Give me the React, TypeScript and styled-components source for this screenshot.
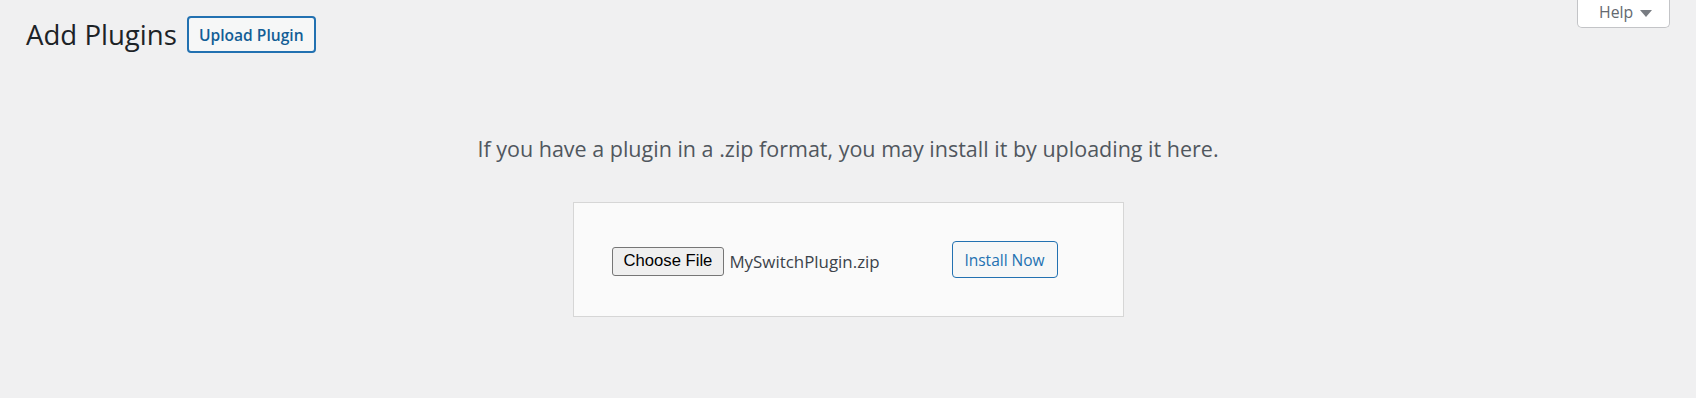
import React from "react";
import styled, { createGlobalStyle } from "styled-components";

const GlobalStyle = createGlobalStyle`
  html, body {
    margin: 0;
    padding: 0;
    background: #f0f0f1;
  }
  body {
    font-family: "Open Sans", "Noto Sans", Arial, sans-serif;
    color: #3c434a;
  }
  * { box-sizing: border-box; }
`;

const Page = styled.div`
  min-height: 398px;
  padding: 0 26px;
  background: #f0f0f1;
`;

const HelpTab = styled.button`
  float: right;
  display: flex;
  align-items: center;
  gap: 7px;
  height: 28px;
  width: 93px;
  padding: 0 18px 2px 21px;
  background: #ffffff;
  border: 1px solid #c3c4c7;
  border-top: none;
  border-radius: 0 0 5px 5px;
  color: #646970;
  font-family: inherit;
  font-size: 15.8px;
  line-height: 1;
  cursor: pointer;
`;

const Caret = styled.span`
  width: 0;
  height: 0;
  border-left: 6px solid transparent;
  border-right: 6px solid transparent;
  border-top: 7px solid #787c82;
  margin-top: 1px;
`;

const TitleRow = styled.div`
  display: flex;
  align-items: center;
  gap: 10px;
  padding-top: 15px;
`;

const Title = styled.h1`
  margin: 0;
  font-size: 27.6px;
  font-weight: 400;
  line-height: 37px;
  color: #1d2327;
  padding-top: 1px;
`;

const TitleAction = styled.button`
  height: 37px;
  padding: 1px 10px 0;
  background: #f6f7f7;
  border: 2px solid #2271b1;
  border-radius: 4px;
  color: #135e96;
  font-family: inherit;
  font-size: 15.6px;
  font-weight: 600;
  cursor: pointer;
`;

const UploadSection = styled.section`
  display: flex;
  flex-direction: column;
  align-items: center;
`;

const Help = styled.p`
  margin: 80px 0 0;
  font-size: 21.5px;
  line-height: 1.5;
  color: #50575e;
  text-align: center;
`;

const UploadForm = styled.form`
  margin-top: 37px;
  display: flex;
  align-items: center;
  width: 551px;
  padding: 38px 65px 38px 38px;
  background: #fafafa;
  border: 1px solid #d6d6d6;
`;

const FileField = styled.div`
  display: flex;
  align-items: center;
  gap: 5px;
  width: 340px;
  padding-top: 3px;
`;

const ChooseButton = styled.button`
  height: 29px;
  padding: 0 11px;
  background: #efefef;
  border: 1px solid #767676;
  border-radius: 3px;
  color: #000000;
  font-family: "Liberation Sans", Arial, sans-serif;
  font-size: 16.67px;
  cursor: pointer;
`;

const FileName = styled.span`
  font-size: 16.9px;
  color: #3c434a;
`;

const InstallButton = styled.button`
  height: 37px;
  width: 106px;
  padding: 0;
  background: #f6f7f7;
  border: 1px solid #2271b1;
  border-radius: 4px;
  color: #2271b1;
  font-family: inherit;
  font-size: 15.5px;
  font-weight: 400;
  cursor: pointer;
`;

export default function App() {
  return (
    <>
      <GlobalStyle />
      <Page>
        <HelpTab type="button">
          Help <Caret />
        </HelpTab>
        <TitleRow>
          <Title>Add Plugins</Title>
          <TitleAction type="button">Upload Plugin</TitleAction>
        </TitleRow>
        <UploadSection>
          <Help>If you have a plugin in a .zip format, you may install it by uploading it here.</Help>
          <UploadForm onSubmit={(e) => e.preventDefault()}>
            <FileField>
              <ChooseButton type="button">Choose File</ChooseButton>
              <FileName>MySwitchPlugin.zip</FileName>
            </FileField>
            <InstallButton type="submit">Install Now</InstallButton>
          </UploadForm>
        </UploadSection>
      </Page>
    </>
  );
}
